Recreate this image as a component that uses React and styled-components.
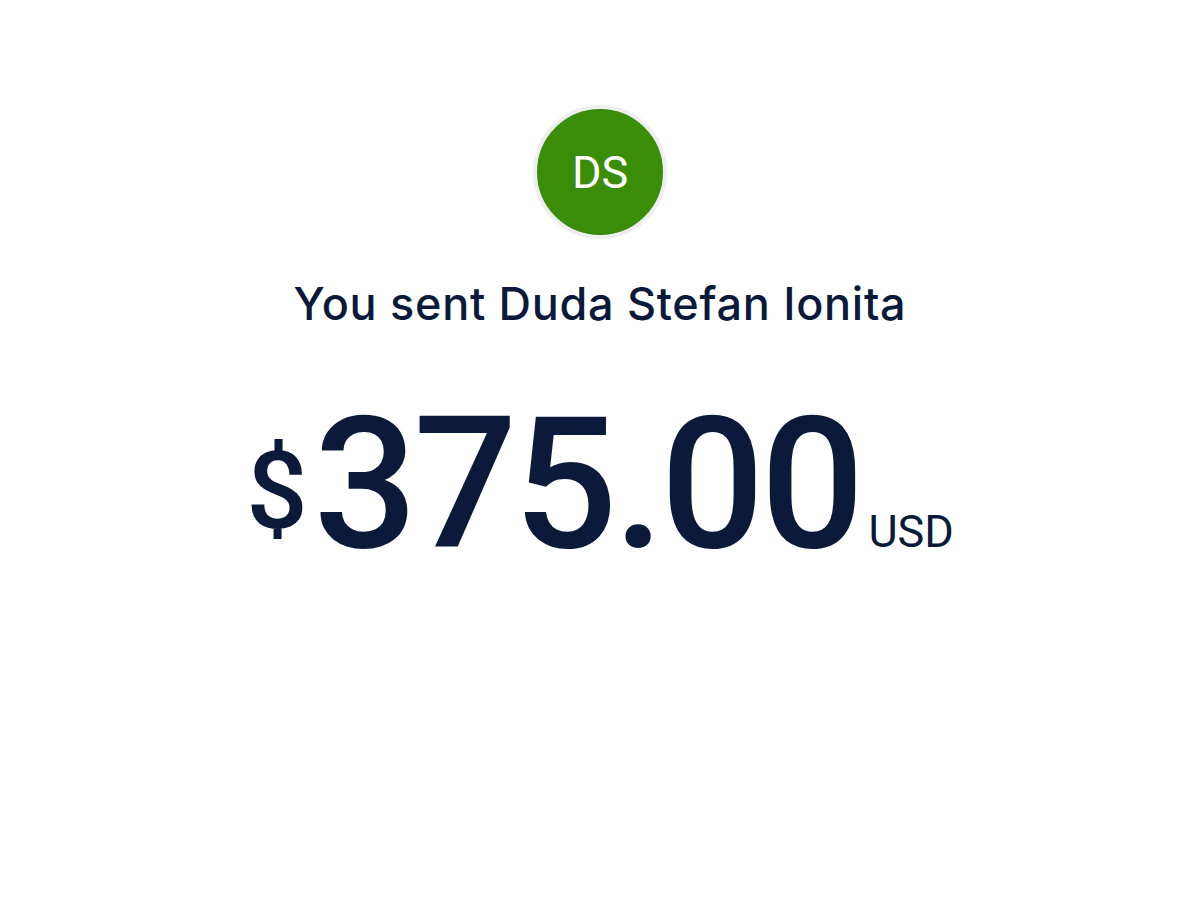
import styled, { createGlobalStyle } from "styled-components";

const Global = createGlobalStyle`
  body {
    margin: 0;
    background: #fff;
    font-family: Roboto, "Noto Sans", sans-serif;
  }
`;

const Page = styled.main`
  display: flex;
  flex-direction: column;
  align-items: center;
  padding-top: 105px;
  color: #0b1a3b;
`;

const Avatar = styled.div`
  width: 126px;
  height: 126px;
  border-radius: 50%;
  background: #3a8d06;
  border: 4px solid #eef0ef;
  display: flex;
  align-items: center;
  justify-content: center;
  color: #fff;
  font-size: 45px;
  font-weight: 400;
`;

const Title = styled.h2`
  margin: 38px 0 0;
  font-family: Inter, Roboto, sans-serif;
  font-size: 45px;
  font-weight: 500;
  letter-spacing: 0.7px;
  line-height: 1.2;
`;

const Amount = styled.div`
  display: flex;
  align-items: baseline;
  margin-top: 62px;
  line-height: 1;
`;

const Symbol = styled.span`
  font-size: 108px;
  font-weight: 500;
  margin-right: 6px;
  position: relative;
  top: -19px;
`;

const Value = styled.span`
  font-size: 183px;
  font-weight: 500;
  letter-spacing: -4px;
`;

const Currency = styled.span`
  font-size: 45px;
  font-weight: 400;
  margin-left: 8px;
`;

export default function App() {
  return (
    <>
      <Global />
      <Page>
        <Avatar>DS</Avatar>
        <Title>You sent Duda Stefan Ionita</Title>
        <Amount>
          <Symbol>$</Symbol>
          <Value>375.00</Value>
          <Currency>USD</Currency>
        </Amount>
      </Page>
    </>
  );
}
